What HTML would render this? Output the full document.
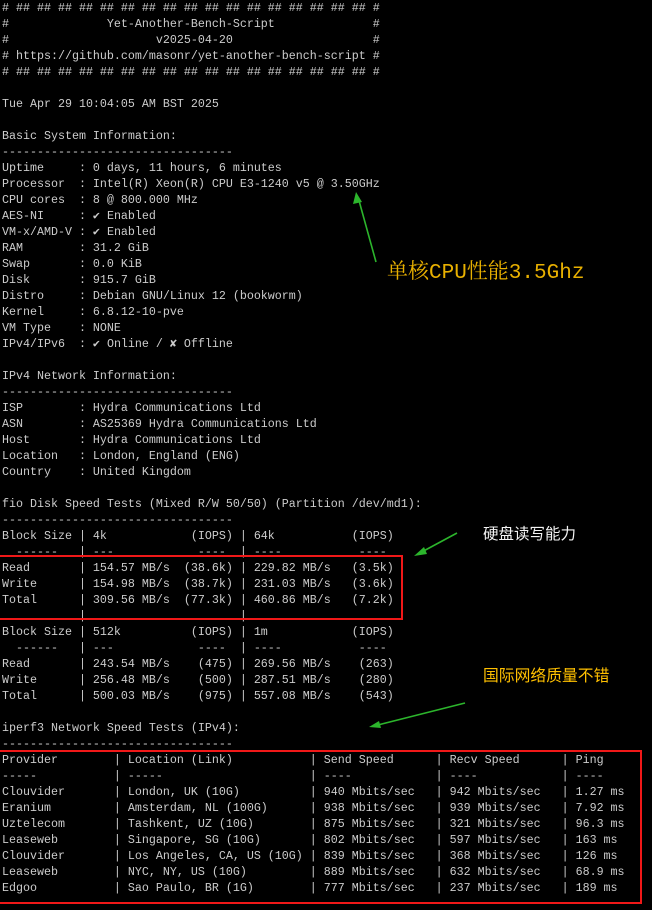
<!DOCTYPE html>
<html><head><meta charset="utf-8"><style>
html,body{margin:0;padding:0;background:#000;width:652px;height:910px;overflow:hidden}
pre{margin:0;position:absolute;left:2px;top:0;font-family:"Liberation Mono","DejaVu Sans Mono",monospace;font-size:11.67px;line-height:16px;color:#cccccc;white-space:pre}
.box{position:absolute;border:2px solid #f01818}
.ann{position:absolute;white-space:nowrap;font-family:"Noto Sans CJK SC",sans-serif}
</style></head><body>
<pre># ## ## ## ## ## ## ## ## ## ## ## ## ## ## ## ## ## #
#              Yet-Another-Bench-Script              #
#                     v2025-04-20                    #
# https://github.com/masonr/yet-another-bench-script #
# ## ## ## ## ## ## ## ## ## ## ## ## ## ## ## ## ## #

Tue Apr 29 10:04:05 AM BST 2025

Basic System Information:
---------------------------------
Uptime     : 0 days, 11 hours, 6 minutes
Processor  : Intel(R) Xeon(R) CPU E3-1240 v5 @ 3.50GHz
CPU cores  : 8 @ 800.000 MHz
AES-NI     : ✔ Enabled
VM-x/AMD-V : ✔ Enabled
RAM        : 31.2 GiB
Swap       : 0.0 KiB
Disk       : 915.7 GiB
Distro     : Debian GNU/Linux 12 (bookworm)
Kernel     : 6.8.12-10-pve
VM Type    : NONE
IPv4/IPv6  : ✔ Online / ✘ Offline

IPv4 Network Information:
---------------------------------
ISP        : Hydra Communications Ltd
ASN        : AS25369 Hydra Communications Ltd
Host       : Hydra Communications Ltd
Location   : London, England (ENG)
Country    : United Kingdom

fio Disk Speed Tests (Mixed R/W 50/50) (Partition /dev/md1):
---------------------------------
Block Size | 4k            (IOPS) | 64k           (IOPS)
  ------   | ---            ----  | ----           ----
Read       | 154.57 MB/s  (38.6k) | 229.82 MB/s   (3.5k)
Write      | 154.98 MB/s  (38.7k) | 231.03 MB/s   (3.6k)
Total      | 309.56 MB/s  (77.3k) | 460.86 MB/s   (7.2k)
           |                      |
Block Size | 512k          (IOPS) | 1m            (IOPS)
  ------   | ---            ----  | ----           ----
Read       | 243.54 MB/s    (475) | 269.56 MB/s    (263)
Write      | 256.48 MB/s    (500) | 287.51 MB/s    (280)
Total      | 500.03 MB/s    (975) | 557.08 MB/s    (543)

iperf3 Network Speed Tests (IPv4):
---------------------------------
Provider        | Location (Link)           | Send Speed      | Recv Speed      | Ping
-----           | -----                     | ----            | ----            | ----
Clouvider       | London, UK (10G)          | 940 Mbits/sec   | 942 Mbits/sec   | 1.27 ms
Eranium         | Amsterdam, NL (100G)      | 938 Mbits/sec   | 939 Mbits/sec   | 7.92 ms
Uztelecom       | Tashkent, UZ (10G)        | 875 Mbits/sec   | 321 Mbits/sec   | 96.3 ms
Leaseweb        | Singapore, SG (10G)       | 802 Mbits/sec   | 597 Mbits/sec   | 163 ms
Clouvider       | Los Angeles, CA, US (10G) | 839 Mbits/sec   | 368 Mbits/sec   | 126 ms
Leaseweb        | NYC, NY, US (10G)         | 889 Mbits/sec   | 632 Mbits/sec   | 68.9 ms
Edgoo           | Sao Paulo, BR (1G)        | 777 Mbits/sec   | 237 Mbits/sec   | 189 ms</pre>
<div class="box" style="left:-2px;top:555px;width:401px;height:61px"></div>
<div class="box" style="left:-2px;top:750px;width:640px;height:150px"></div>
<div class="ann" style="left:387px;top:261px;font-size:21px;line-height:26px;color:#e8b000;font-family:'Liberation Mono','Noto Serif CJK SC',serif">单核CPU性能3.5Ghz</div>
<div class="ann" style="left:483px;top:523px;font-size:15.5px;line-height:20px;color:#f4f4f4">硬盘读写能力</div>
<div class="ann" style="left:483px;top:665px;font-size:15.8px;line-height:20px;color:#ffc000">国际网络质量不错</div>
<svg width="652" height="910" style="position:absolute;left:0;top:0" viewBox="0 0 652 910">
<g stroke="#2cb52c" stroke-width="1.6" fill="#2cb52c">
<line x1="376" y1="262" x2="358" y2="197"/>
<polygon points="356,192 353,204 362,202" stroke="none"/>
<line x1="457" y1="533" x2="418" y2="554"/>
<polygon points="414,556 424,547 427,554" stroke="none"/>
<line x1="465" y1="703" x2="374" y2="726"/>
<polygon points="369,727 379,721 381,728" stroke="none"/>
</g></svg>
</body></html>
